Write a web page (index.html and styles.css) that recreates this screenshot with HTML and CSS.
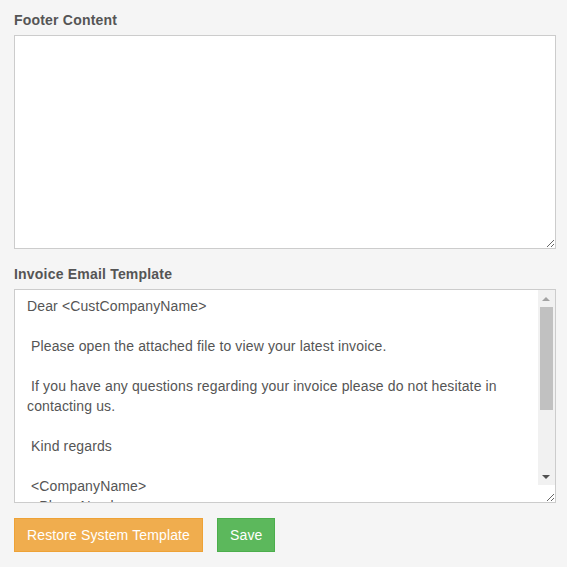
FILE: index.html
```html
<!DOCTYPE html>
<html>
<head>
<meta charset="utf-8">
<link rel="stylesheet" href="styles.css">
</head>
<body>
<div class="page">
  <div class="form-group">
    <label class="field-label" for="footer">Footer Content</label>
    <textarea id="footer" class="field"></textarea>
  </div>
  <div class="form-group">
    <label class="field-label" for="invoice">Invoice Email Template</label>
    <div class="scroll-wrap">
      <textarea id="invoice" class="field field-scroll">Dear &lt;CustCompanyName&gt;

 Please open the attached file to view your latest invoice.

 If you have any questions regarding your invoice please do not hesitate in contacting us.

 Kind regards

 &lt;CompanyName&gt;
 &lt;PhoneNumber&gt;
 &lt;Email&gt;
 &lt;Website&gt;
 &lt;Address1&gt;
 &lt;Address2&gt;
 &lt;City&gt;
 &lt;Postcode&gt;</textarea>
      <div class="vscroll" aria-hidden="true">
        <div class="sb-btn"><span class="arrow-up"></span></div>
        <div class="sb-track"><div class="sb-thumb"></div></div>
        <div class="sb-btn"><span class="arrow-down"></span></div>
      </div>
    </div>
  </div>
  <div class="actions">
    <button class="btn btn-warning">Restore System Template</button>
    <button class="btn btn-success">Save</button>
  </div>
</div>
</body>
</html>
```

FILE: styles.css
```css
html, body {
  margin: 0;
  padding: 0;
  background: #f5f5f5;
}
body {
  font-family: "Liberation Sans", Arial, Helvetica, sans-serif;
  font-size: 14px;
  line-height: 20px;
  color: #555;
}
.page {
  padding: 10px 11px 0 14px;
}
.form-group {
  margin-bottom: 15px;
}
.field-label {
  display: block;
  font-weight: bold;
  font-size: 14px;
  line-height: 20px;
  letter-spacing: 0.2px;
  color: #555;
  margin-bottom: 5px;
}
.field {
  display: block;
  box-sizing: border-box;
  width: 542px;
  height: 214px;
  margin: 0;
  padding: 6px 12px;
  border: 1px solid #ccc;
  border-radius: 0;
  background: #fff;
  font-family: "Liberation Sans", Arial, Helvetica, sans-serif;
  font-size: 14px;
  line-height: 20px;
  letter-spacing: 0.13px;
  color: #555;
  outline: none;
}
.scroll-wrap {
  position: relative;
  width: 542px;
}
.field-scroll {
  padding-right: 29px;
}
.vscroll {
  position: absolute;
  top: 1px;
  right: 1px;
  bottom: 18px;
  width: 17px;
  display: flex;
  flex-direction: column;
  background: #f1f1f1;
}
.sb-btn {
  height: 17px;
  flex: none;
  display: flex;
  align-items: center;
  justify-content: center;
}
.arrow-up {
  width: 0;
  height: 0;
  margin-left: -1px;
  border-left: 4px solid transparent;
  border-right: 4px solid transparent;
  border-bottom: 4px solid #a3a3a3;
}
.arrow-down {
  width: 0;
  height: 0;
  margin-left: -1px;
  border-left: 4px solid transparent;
  border-right: 4px solid transparent;
  border-top: 4px solid #505050;
}
.sb-track {
  flex: 1;
  padding: 0 2px;
}
.sb-thumb {
  height: 103px;
  background: #c1c1c1;
}
.actions {
  display: flex;
  gap: 14px;
}
.btn {
  box-sizing: border-box;
  height: 34px;
  padding: 6px 12px;
  border: 1px solid transparent;
  border-radius: 0;
  font-family: "Liberation Sans", Arial, Helvetica, sans-serif;
  font-size: 14px;
  line-height: 20px;
  letter-spacing: 0.13px;
  color: #fff;
  cursor: pointer;
}
.btn-warning {
  background: #f0ad4e;
  border-color: #eea236;
}
.btn-success {
  background: #5cb85c;
  border-color: #4cae4c;
}
```
